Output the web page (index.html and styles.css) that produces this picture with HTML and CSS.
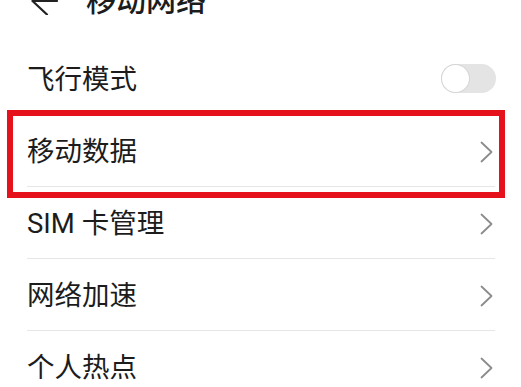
FILE: index.html
```html
<!DOCTYPE html>
<html lang="zh-CN">
<head>
<meta charset="utf-8">
<title>移动网络</title>
<link rel="stylesheet" href="styles.css">
</head>
<body>
<header class="header">
  <div class="header-bar">
    <svg class="back" width="28" height="28" viewBox="0 0 28 28"><path d="M16 0.5 L1.5 14 L16 27.5 M1.5 14 H26" fill="none" stroke="#222" stroke-width="2.2" stroke-linecap="round" stroke-linejoin="round"/></svg>
    <h1 class="title">移动网络</h1>
  </div>
</header>
<ul class="list">
  <li class="row">
    <span class="label">飞行模式</span>
    <span class="switch"><span class="knob"></span></span>
  </li>
  <li class="row highlighted">
    <span class="label">移动数据</span>
    <svg class="chev" width="14" height="22" viewBox="0 0 14 22"><path d="M1.5 1.5 L11.5 11 L1.5 20.5" fill="none" stroke="#8c8c8c" stroke-width="1.8" stroke-linecap="round" stroke-linejoin="round"/></svg>
    <span class="mark"></span>
  </li>
  <li class="row">
    <span class="label">SIM 卡管理</span>
    <svg class="chev" width="14" height="22" viewBox="0 0 14 22"><path d="M1.5 1.5 L11.5 11 L1.5 20.5" fill="none" stroke="#8c8c8c" stroke-width="1.8" stroke-linecap="round" stroke-linejoin="round"/></svg>
  </li>
  <li class="row">
    <span class="label">网络加速</span>
    <svg class="chev" width="14" height="22" viewBox="0 0 14 22"><path d="M1.5 1.5 L11.5 11 L1.5 20.5" fill="none" stroke="#8c8c8c" stroke-width="1.8" stroke-linecap="round" stroke-linejoin="round"/></svg>
  </li>
  <li class="row">
    <span class="label">个人热点</span>
    <svg class="chev" width="14" height="22" viewBox="0 0 14 22"><path d="M1.5 1.5 L11.5 11 L1.5 20.5" fill="none" stroke="#8c8c8c" stroke-width="1.8" stroke-linecap="round" stroke-linejoin="round"/></svg>
  </li>
</ul>
</body>
</html>
```

FILE: styles.css
```css
html, body {
  margin: 0;
  padding: 0;
  background: #ffffff;
  overflow: hidden;
}
body {
  width: 521px;
  height: 387px;
  font-family: "Roboto", "Noto Sans CJK SC", sans-serif;
  color: #1c1c1c;
}
.header {
  display: flex;
  align-items: flex-start;
  height: 43px;
}
.header-bar {
  display: flex;
  align-items: center;
  height: 28px;
  margin-top: -13px;
  padding-left: 31px;
}
.back {
  display: block;
  flex: none;
}
.title {
  margin: 0 0 0 27px;
  font-size: 30px;
  line-height: 28px;
  font-weight: 500;
  color: #1c1c1c;
}
.list {
  list-style: none;
  margin: 0;
  padding: 0;
}
.row {
  position: relative;
  display: flex;
  align-items: center;
  justify-content: space-between;
  height: 72px;
  box-sizing: border-box;
  margin: 0 26px 0 27px;
  border-bottom: 1px solid #e6e6e6;
}
.label {
  font-size: 27.5px;
  line-height: 1;
  padding-top: 3px;
}
.chev {
  display: block;
  margin-right: 1px;
  margin-top: 2px;
}
.switch {
  position: relative;
  display: block;
  width: 55px;
  height: 29px;
  border-radius: 15px;
  background: #e4e4e4;
  margin-right: -1px;
}
.knob {
  position: absolute;
  left: 1px;
  top: 1px;
  width: 27px;
  height: 27px;
  border-radius: 50%;
  background: #ffffff;
  box-shadow: 0 0 0 1px #d6d6d6;
}
.mark {
  position: absolute;
  left: -20px;
  right: -10px;
  top: -5px;
  bottom: -12px;
  border: 6px solid #e5111b;
  pointer-events: none;
}
```
